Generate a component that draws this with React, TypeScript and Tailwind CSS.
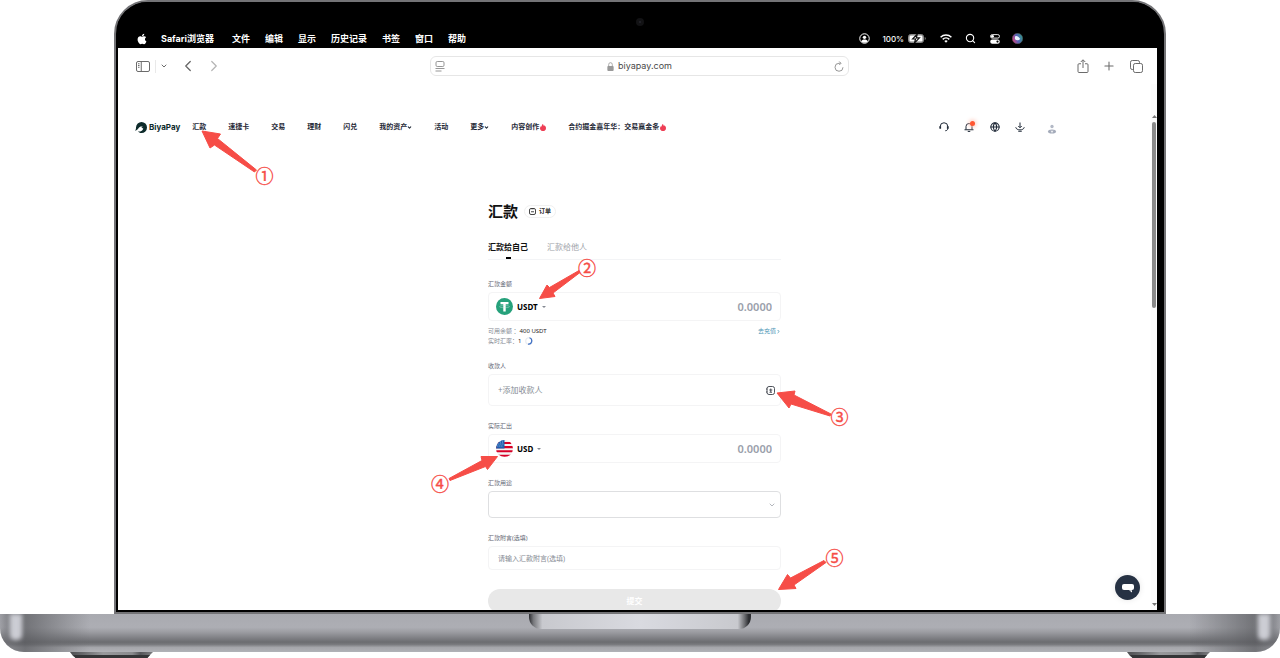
import React from "react";
import { FaApple } from "react-icons/fa";
import { ChevronDown, ChevronLeft, ChevronRight, Globe, Plus, RotateCw, Search } from "lucide-react";

const RED = "#f64d47";

function Flame() {
  return (
    <svg viewBox="0 0 12 14" className="h-[7px] w-[6px] shrink-0" aria-hidden="true">
      <path
        d="M5.6 0C7 1.2 7.6 2.6 7.5 4.2 8.3 3.9 8.7 3.3 8.8 2.5 10.8 4.2 12 6.2 12 8.3 12 11.6 9.4 14 6 14S0 11.6 0 8.3C0 6.4.9 4.9 2.2 3.9c.1.8.4 1.3 1 1.6C3.3 3.2 4 1.3 5.6 0Z"
        fill="#ee3f55"
      />
    </svg>
  );
}

function BatteryIcon() {
  return (
    <svg viewBox="0 0 18 9" className="h-[9px] w-[18px]" aria-hidden="true">
      <rect x="0.5" y="0.5" width="15" height="8" rx="2.2" fill="#777" stroke="#8a8a8a" />
      <rect x="1.5" y="1.5" width="13" height="6" rx="1.2" fill="#fff" />
      <path d="M9.3 0 4.6 5h2.9L6.500 9l4.900-5.100H8.400Z" fill="#fff" stroke="#111" strokeWidth="1.2" />
      <path d="M16.7 3v3c.7-.2 1.1-.8 1.1-1.500S17.400 3.200 16.700 3Z" fill="#777" />
    </svg>
  );
}

function WifiIcon() {
  return (
    <svg viewBox="0 0 24 18" className="h-[9px] w-[12px]" fill="none" stroke="#fff" strokeWidth="3" aria-hidden="true">
      <path d="M1.2 6.5C7.3.6 16.7.6 22.8 6.5" />
      <path d="M5.4 10.7c3.8-3.6 9.4-3.6 13.2 0" />
      <path d="M12 17.5 8.6 14c1.900-1.900 4.900-1.900 6.800 0Z" fill="#fff" stroke="none" />
    </svg>
  );
}

function UserCircleIcon() {
  return (
    <svg viewBox="0 0 22 22" className="size-[11px]" aria-hidden="true">
      <circle cx="11" cy="11" r="9.5" fill="none" stroke="#fff" strokeWidth="2" />
      <circle cx="11" cy="8.7" r="3.4" fill="#fff" />
      <path d="M4.5 17c1-3.2 3.5-4.2 6.5-4.2s5.5 1 6.5 4.2c-3.6 3.4-9.4 3.4-13 0Z" fill="#fff" />
    </svg>
  );
}

function ControlCenterIcon() {
  return (
    <svg viewBox="0 0 20 20" className="size-[10px]" aria-hidden="true">
      <rect x="1" y="1.2" width="18" height="7" rx="3.5" fill="none" stroke="#fff" strokeWidth="1.8" />
      <circle cx="5" cy="4.7" r="2.8" fill="#fff" />
      <rect x="0.5" y="11" width="19" height="8.5" rx="4.2" fill="#fff" />
      <circle cx="15" cy="15.2" r="2.2" fill="#000" />
    </svg>
  );
}

function SiriIcon() {
  return (
    <svg viewBox="0 0 20 20" className="size-[11px]" aria-hidden="true">
      <defs>
        <linearGradient id="siri" x1="0" y1="0.6" x2="1" y2="0.3">
          <stop offset="0" stopColor="#d8437e" />
          <stop offset="0.45" stopColor="#5a5fb8" />
          <stop offset="1" stopColor="#2c9a8a" />
        </linearGradient>
      </defs>
      <circle cx="10" cy="10" r="9.5" fill="url(#siri)" stroke="#555" />
      <path d="M6 6c3-1.500 6 1 9 5-2.500 2.500-7 3-9 1-1-1.500-1-4.500 0-6Z" fill="#e9f3ff" />
    </svg>
  );
}

const menus = ["文件", "编辑", "显示", "历史记录", "书签", "窗口", "帮助"];

function MenuBar() {
  return (
    <div className="relative flex h-[46px] items-end bg-black text-white">
      <span className="absolute left-1/2 top-[16px] flex size-[8px] -translate-x-1/4 items-center justify-center rounded-full bg-[#121214]">
        <span className="size-[2px] rounded-full bg-[#26262c]" />
      </span>
      <div className="flex h-[19px] flex-1 items-center pl-[18px] pr-[134px] text-[9px] font-medium leading-[12px]">
        <FaApple className="mr-[13px] size-[12px]" />
        <span className="mr-[18px] font-bold">Safari浏览器</span>
        <div className="flex gap-[15px] font-bold">
          {menus.map((m) => (
            <span key={m}>{m}</span>
          ))}
        </div>
        <div className="ml-auto flex items-center">
          <UserCircleIcon />
          <span className="ml-[12px] mr-[4px] text-[8px]">100%</span>
          <BatteryIcon />
          <span className="ml-[14px]">
            <WifiIcon />
          </span>
          <Search className="ml-[13px] size-[11px]" strokeWidth={2.4} />
          <span className="ml-[14px]">
            <ControlCenterIcon />
          </span>
          <span className="ml-[12px]">
            <SiriIcon />
          </span>
        </div>
      </div>
    </div>
  );
}

function Toolbar() {
  return (
    <div className="grid h-[36px] shrink-0 grid-cols-[1fr_419px_1fr] items-center pl-[18px] pr-[14px] text-[#6b6b6b]">
      <div className="flex items-center">
        <button type="button" aria-label="边栏">
          <svg viewBox="0 0 28 22" className="h-[11px] w-[14px]" fill="none" stroke="currentColor" strokeWidth="2" aria-hidden="true">
            <rect x="1" y="1" width="26" height="20" rx="3" />
            <path d="M10.500 1v20M4 5.500h3M4 9h3M4 12.500h3" />
          </svg>
        </button>
        <span className="ml-[5px] h-[13px] w-px bg-[#e9e9e9]" />
        <button type="button" aria-label="标签页组" className="ml-[4px]">
          <ChevronDown className="size-[8px]" strokeWidth={3} />
        </button>
        <button type="button" aria-label="后退" className="ml-[11px]">
          <ChevronLeft className="size-[18px]" strokeWidth={1.8} />
        </button>
        <button type="button" aria-label="前进" className="ml-[8px] text-[#b4b4b4]">
          <ChevronRight className="size-[18px]" strokeWidth={1.6} />
        </button>
      </div>
      <div className="flex h-[20px] items-center justify-between rounded-[6px] border border-[#e6e6e6] px-[4px]">
        <svg viewBox="0 0 20 22" className="h-[11px] w-[10px]" fill="none" stroke="#8b8b8b" strokeWidth="1.8" aria-hidden="true">
          <rect x="2" y="1" width="16" height="10" rx="2.5" />
          <path d="M1 15h18M1 20h12" />
        </svg>
        <div className="flex items-center gap-[4px] text-[9px] leading-[12px] text-[#4a4a4a]">
          <svg viewBox="0 0 14 20" className="h-[9px] w-[7px]" aria-hidden="true">
            <rect x="0" y="9" width="14" height="11" rx="2" fill="#9a9a9a" />
            <path d="M3 9V5.500a4 4 0 0 1 8 0V9" fill="none" stroke="#9a9a9a" strokeWidth="1.8" />
          </svg>
          biyapay.com
        </div>
        <button type="button" aria-label="刷新">
          <svg viewBox="0 0 20 22" className="h-[11px] w-[10px]" fill="none" stroke="#8b8b8b" strokeWidth="1.8" aria-hidden="true">
            <path d="M18 12.500A8 8 0 1 1 10 4.500h3M10.500 1l3.500 3.500L10.500 8" />
          </svg>
        </button>
      </div>
      <div className="flex items-center justify-end">
        <button type="button" aria-label="分享">
          <svg viewBox="0 0 24 28" className="h-[14px] w-[12px]" fill="none" stroke="currentColor" strokeWidth="2" aria-hidden="true">
            <path d="M8 9.500H4a2 2 0 0 0-2 2V25a2 2 0 0 0 2 2h16a2 2 0 0 0 2-2V11.500a2 2 0 0 0-2-2h-4M12 18V2M7.500 6 12 1.500 16.500 6" />
          </svg>
        </button>
        <button type="button" aria-label="新标签页" className="ml-[13px]">
          <Plus className="size-[14px]" strokeWidth={1.8} />
        </button>
        <button type="button" aria-label="标签页概览" className="ml-[14px]">
          <svg viewBox="0 0 26 26" className="size-[13px]" fill="none" stroke="currentColor" strokeWidth="2" aria-hidden="true">
            <rect x="7" y="7" width="18" height="18" rx="3.5" />
            <path d="M7 19H4.500A3.500 3.500 0 0 1 1 15.500v-11A3.500 3.500 0 0 1 4.500 1h11A3.500 3.500 0 0 1 19 4.500V7" />
          </svg>
        </button>
      </div>
    </div>
  );
}

type NavItem = { label: string; menu?: boolean; hot?: boolean };

const navItems: NavItem[] = [
  { label: "汇款" },
  { label: "速捷卡" },
  { label: "交易" },
  { label: "理财" },
  { label: "闪兑" },
  { label: "我的资产", menu: true },
  { label: "活动" },
  { label: "更多", menu: true },
  { label: "内容创作", hot: true },
  { label: "合约掘金嘉年华：交易赢金条", hot: true },
];

function SiteHeader() {
  return (
    <header className="relative flex h-[86px] items-center pl-[17px] pr-[94px] text-[#1f2937]">
      <a href="#home" className="mr-[12px] flex items-center gap-[2px] font-['Inter',sans-serif] text-[8px] font-bold leading-[12px] text-[#0d2b2b]">
        <svg viewBox="0 0 24 22" className="h-[11px] w-[12px]" aria-hidden="true">
          <path
            d="M13 0a11 11 0 0 1 0 22c-3.2 0-5.5-1.2-7.3-3 4 .8 8.800-.6 10.300-4.500.9-2.600 0-4.500-1.500-5.500-3-.6-6 .6-7.200 3.200C6.200 14.500 4.500 16.600 0 17.300 1.700 15.400 2 13.500 2.100 10.500A11 11 0 0 1 13 0Z"
            fill="#0d2b2b"
          />
          <path d="M12 9.300c1 1.200 2.600 1 4.600.4l-.8 3.500Z" fill="#0d2b2b" />
        </svg>
        BiyaPay
      </a>
      <nav className="flex items-center gap-[22px] text-[7px] font-bold leading-[12px]">
        {navItems.map((item) => (
          <a key={item.label} href="#nav" className="flex items-center whitespace-nowrap">
            {item.label}
            {item.menu && <ChevronDown className="size-[5px]" strokeWidth={5} />}
            {item.hot && (
              <span className="ml-px">
                <Flame />
              </span>
            )}
          </a>
        ))}
      </nav>
      <div className="ml-auto flex items-center">
        <button type="button" aria-label="客服">
          <svg viewBox="0 0 20 20" className="size-[10px]" fill="none" stroke="currentColor" strokeWidth="2" aria-hidden="true">
            <path d="M2.500 12V9a7.500 7.500 0 0 1 15 0v4c0 2.800-2 4.500-5 4.500" />
            <path d="M2.500 8.500v5M17.500 8.500v5" strokeWidth="3.4" />
          </svg>
        </button>
        <button type="button" aria-label="通知" className="relative ml-[15px]">
          <svg viewBox="0 0 20 20" className="size-[10px]" fill="none" stroke="currentColor" strokeWidth="2" aria-hidden="true">
            <path d="M4 15V9a6 6 0 0 1 12 0v6M1 15.500h18M7.500 18.800h5" />
          </svg>
          <span className="absolute -right-px -top-px size-[5px] rounded-full bg-[#ff5530] shadow-[0_0_4px_1px_#ffc4b5]" />
        </button>
        <button type="button" aria-label="语言" className="ml-[16px]">
          <Globe className="size-[10px]" strokeWidth={2.6} />
        </button>
        <button type="button" aria-label="下载" className="ml-[15px]">
          <svg viewBox="0 0 20 20" className="size-[10px]" fill="none" stroke="currentColor" strokeWidth="2" aria-hidden="true">
            <path d="M10 1v10M6.500 8l3.500 3.500L13.500 8M1.500 10.500c1 7 16 7 17 0M6.500 18.500h7" />
          </svg>
        </button>
        <button type="button" aria-label="账户" className="ml-[22px] pt-[3px]">
          <svg viewBox="0 0 20 20" className="size-[10px]" aria-hidden="true">
            <circle cx="10" cy="5" r="3.300" fill="#b3b9c6" />
            <ellipse cx="10" cy="15" rx="8" ry="4" fill="#a4abba" />
            <path d="M7 13.500h6l-3 4.500Z" fill="#eef0f4" />
          </svg>
        </button>
      </div>
      <svg viewBox="0 0 90 70" className="pointer-events-none absolute left-[72px] top-[36px] h-[70px] w-[90px] overflow-visible" aria-hidden="true">
        <path d="M12 11 30.500 14 27.500 18.500 66.500 50 64.500 52 24.500 25 20 28Z" fill={RED} stroke={RED} strokeLinejoin="round" />
        <text x="74.500" y="63" textAnchor="middle" fontSize="18" fill={RED} stroke={RED} strokeWidth="0.4">
          ①
        </text>
      </svg>
    </header>
  );
}

const callouts = [
  { n: "②", x: 99, y: 72, d: "M51.500 95.500 59 82 61.500 84.500 91 67.500 92 69.500 65 90 67 93.500Z" },
  { n: "③", x: 351.5, y: 221, d: "M289 190 307 188 306 192 343 211 342 213 303 201 301 205Z" },
  { n: "④", x: -48, y: 288, d: "M9.500 253.500-7 253.500-6 257.500-39 275.500-38 277.500-2.500 263.500-.5 266.500Z" },
  { n: "⑤", x: 346.5, y: 362, d: "M290.500 386.500 299.500 371.500 302.500 375 336 357.500 338 359.500 306 382 308 385.500Z" },
];

function Callouts() {
  return (
    <svg viewBox="0 0 293 410" className="pointer-events-none absolute left-0 top-0 h-[410px] w-[293px] overflow-visible" aria-hidden="true">
      {callouts.map((c) => (
        <g key={c.n} fill={RED} stroke={RED}>
          <path d={c.d} strokeLinejoin="round" />
          <text x={c.x} y={c.y} textAnchor="middle" fontSize="18" strokeWidth="0.4">
            {c.n}
          </text>
        </g>
      ))}
    </svg>
  );
}

function TetherIcon() {
  return (
    <svg viewBox="0 0 34 34" className="size-[17px]" aria-hidden="true">
      <circle cx="17" cy="17" r="17" fill="#26a17b" />
      <path d="M9 8h16v4.500h-5.600V27h-4.800V12.500H9Z" fill="#fff" />
      <ellipse cx="17" cy="17.300" rx="10" ry="2.200" fill="none" stroke="#d4ece4" strokeWidth="0.8" />
    </svg>
  );
}

function UsFlagIcon() {
  return (
    <svg viewBox="0 0 34 34" className="size-[17px]" aria-hidden="true">
      <defs>
        <clipPath id="flag">
          <circle cx="17" cy="17" r="17" />
        </clipPath>
      </defs>
      <g clipPath="url(#flag)">
        <rect width="34" height="34" fill="#f4f4f4" />
        <path d="M0 6h34M0 14.300h34M0 22.600h34M0 31.500h34" stroke="#d80027" strokeWidth="4.200" />
        <rect width="17" height="17" fill="#1d5fb0" />
        <path d="M8 4h1.500M12.500 4H14M5 8h1.500M9 8h1.500M13 8h1.500M3 12h1.500M7 12h1.500M11 12h1.500" stroke="#dce8f7" strokeWidth="1.600" />
      </g>
    </svg>
  );
}

function Label({ htmlFor, children }: { htmlFor: string; children: React.ReactNode }) {
  return (
    <label htmlFor={htmlFor} className="mb-[4px] block text-[6px] leading-[8px] text-[#5f6673]">
      {children}
    </label>
  );
}

function AmountField({ id, code, icon }: { id: string; code: string; icon: React.ReactNode }) {
  return (
    <div className="flex h-[29px] items-center rounded-[4px] border border-[#f4f4f5] pl-[7px] pr-[8px]">
      <button type="button" className="flex items-center text-[8px] font-bold leading-[12px] text-black">
        {icon}
        <span className="ml-[4px]">{code}</span>
        <svg viewBox="0 0 8 4" className="ml-[4px] h-[2px] w-[4px]" aria-hidden="true">
          <path d="M0 0h8L4 4Z" fill="#858a93" />
        </svg>
      </button>
      <input
        id={id}
        placeholder="0.0000"
        className="min-w-0 flex-1 bg-transparent text-right text-[11px] font-semibold leading-[14px] outline-none placeholder:text-[#9aa0ab]"
      />
    </div>
  );
}

function RemitForm() {
  return (
    <form className="relative mx-auto w-[293px] max-w-full">
      <div className="flex h-[16px] items-center">
        <h1 className="text-[15px] font-bold leading-[16px] text-[#111]">汇款</h1>
        <button
          type="button"
          className="ml-[6px] flex h-[13px] items-center gap-[3px] rounded-full border border-[#f0f0f0] px-[4px] text-[6px] font-bold leading-[8px] text-[#222]"
        >
          <svg viewBox="0 0 14 14" className="size-[7px]" fill="none" stroke="#333" strokeWidth="1.8" aria-hidden="true">
            <rect x="1" y="1" width="12" height="12" rx="3" />
            <path d="M4.500 1.500h5M4 7.500h6" />
          </svg>
          订单
        </button>
      </div>

      <div role="tablist" className="mt-[22px] flex items-start gap-[19px] border-b border-[#f3f4f6] text-[8px] leading-[12px]">
        <button type="button" role="tab" aria-selected="true" className="flex flex-col items-center font-bold text-[#111]">
          汇款给自己
          <span className="mt-[4px] h-[2px] w-[5px] bg-black" />
        </button>
        <button type="button" role="tab" aria-selected="false" className="text-[#a0a3a9]">
          汇款给他人
        </button>
      </div>

      <div className="mt-[20px]">
        <Label htmlFor="amount">汇款金额</Label>
        <AmountField id="amount" code="USDT" icon={<TetherIcon />} />
        <div className="mt-[5px] text-[6px] leading-[10px] text-[#858a93]">
          <p className="flex justify-between">
            <span>
              可用余额 ：<span className="text-[#222]">400 USDT</span>
            </span>
            <a href="#deposit" className="flex items-center text-[#4a95b5]">
              去充值
              <ChevronRight className="size-[5px]" strokeWidth={4} />
            </a>
          </p>
          <p className="flex items-center">
            实时汇率：<span className="text-[#222]">1</span>
            <svg viewBox="0 0 16 16" className="ml-[4px] size-[8px]" fill="none" strokeWidth="2.4" aria-hidden="true">
              <circle cx="8" cy="8" r="6.5" stroke="#e8ebf1" />
              <path d="M9 1.600A6.500 6.500 0 0 1 6 14.200" stroke="#3d6fc4" />
            </svg>
          </p>
        </div>
      </div>

      <div className="mt-[16px]">
        <Label htmlFor="payee">收款人</Label>
        <div className="flex h-[32px] items-center rounded-[4px] border border-[#f4f4f5] pl-[9px] pr-[5px]">
          <input
            id="payee"
            placeholder="+添加收款人"
            className="min-w-0 flex-1 bg-transparent text-[8px] leading-[12px] outline-none placeholder:text-[#868b94]"
          />
          <button type="button" aria-label="选择收款人">
            <svg viewBox="0 0 18 18" className="size-[9px]" fill="none" stroke="#3a3f48" strokeWidth="1.8" aria-hidden="true">
              <rect x="2" y="1" width="15" height="16" rx="4" />
              <path d="M0 6h3M0 12h3M6.500 8h6M7 12.500h5M9.500 5v7" />
            </svg>
          </button>
        </div>
      </div>

      <div className="mt-[16px]">
        <Label htmlFor="payout">实际汇出</Label>
        <AmountField id="payout" code="USD" icon={<UsFlagIcon />} />
      </div>

      <div className="mt-[16px]">
        <Label htmlFor="purpose">汇款用途</Label>
        <div className="grid items-center">
          <select
            id="purpose"
            defaultValue=""
            className="col-start-1 row-start-1 h-[27px] appearance-none rounded-[4px] border border-[#dedfe1] bg-transparent px-[9px] text-[8px] outline-none"
          >
            <option value="" />
          </select>
          <ChevronDown className="pointer-events-none col-start-1 row-start-1 mr-[5px] size-[8px] justify-self-end text-[#b4b7bd]" strokeWidth={3} />
        </div>
      </div>

      <div className="mt-[16px]">
        <Label htmlFor="note">汇款附言(选填)</Label>
        <input
          id="note"
          placeholder="请输入汇款附言(选填)"
          className="block h-[24px] w-full rounded-[4px] border border-[#f4f4f5] bg-transparent px-[9px] text-[7px] leading-[12px] outline-none placeholder:text-[#868b94]"
        />
      </div>

      <button
        type="button"
        className="mt-[19px] block h-[24px] w-full rounded-full bg-[#e8e8e8] text-center text-[8px] font-bold leading-[12px] text-white"
      >
        提交
      </button>
      <Callouts />
    </form>
  );
}

function ScrollBar() {
  return (
    <div className="flex w-[6px] shrink-0 flex-col items-center bg-[#fcfcfc] pb-[4px] pt-[31px]">
      <svg viewBox="0 0 10 6" className="h-[3px] w-[5px]" aria-hidden="true">
        <path d="M0 6h10L5 0Z" fill="#777" />
      </svg>
      <span className="mt-[4px] h-[186px] w-[4px] rounded-full bg-[#8a8a8a]" />
      <svg viewBox="0 0 10 6" className="mt-auto h-[3px] w-[5px]" aria-hidden="true">
        <path d="M0 0h10L5 6Z" fill="#777" />
      </svg>
    </div>
  );
}

function Foot() {
  return (
    <svg viewBox="0 0 83 6" className="h-[6px] w-[83px]" aria-hidden="true">
      <defs>
        <linearGradient id="foot">
          <stop offset="0" stopColor="#4d4e51" />
          <stop offset="0.15" stopColor="#66676a" />
          <stop offset="0.4" stopColor="#98999c" />
          <stop offset="0.75" stopColor="#8a8b8e" />
          <stop offset="0.85" stopColor="#55565a" />
          <stop offset="1" stopColor="#7d7e81" />
        </linearGradient>
      </defs>
      <path d="M0 0h83l-4 4-2 2H6L3 4Z" fill="url(#foot)" />
      <path d="M3 3h77l-2.500 3H5.500Z" fill="#343537" />
    </svg>
  );
}

function EdgeShine() {
  return (
    <div className="h-full w-[90px] bg-[linear-gradient(to_right,rgba(110,111,116,0.2)_0%,rgba(110,111,116,0.6)_8%,rgba(90,91,95,0.7)_28%,rgba(100,101,105,0.5)_55%,rgba(120,121,125,0)_100%)]">
      <div className="ml-[10px] h-[26px] w-[12px] rounded-b-[5px] bg-[#cccdd4] blur-[2px]" />
    </div>
  );
}

function LaptopBase() {
  return (
    <div className="shrink-0">
      <div className="h-[38px] overflow-hidden rounded-b-[24px] bg-[linear-gradient(to_bottom,#a9aab0_0%,#adaeb4_35%,#9b9ca1_48%,#6b6c70_74%,#78797d_80%,#a5a6ab_88%,#b1b2b7_100%)]">
        <div className="flex h-full justify-between">
          <EdgeShine />
          <div className="h-[15px] w-[222px] rounded-b-[12px] bg-[linear-gradient(to_right,#2b2c30_0%,#77787c_2%,#c8c9ce_6%,#d9dae0_50%,#c8c9ce_94%,#6f7074_97%,#2b2c30_99%)]" />
          <div className="flex -scale-x-100">
            <EdgeShine />
          </div>
        </div>
      </div>
      <div className="flex h-[6px] justify-between px-[70px]">
        <Foot />
        <Foot />
      </div>
    </div>
  );
}

export default function App() {
  return (
    <div className="flex h-screen flex-col overflow-hidden bg-white font-['Inter','Noto_Sans_CJK_SC',sans-serif]">
      <div className="mx-[114px] flex min-h-0 flex-1 flex-col overflow-hidden rounded-t-[34px] border-2 border-[#737376] bg-black pb-[2px] pl-[2px] pr-[7px]">
        <MenuBar />
        <div className="relative flex min-h-0 flex-1 flex-col overflow-hidden bg-white">
          <Toolbar />
          <div className="flex min-h-0 flex-1 font-['Noto_Sans','Noto_Sans_CJK_SC',sans-serif]">
            <div className="min-w-0 flex-1">
              <SiteHeader />
              <main className="pt-[33px]">
                <RemitForm />
              </main>
            </div>
            <ScrollBar />
          </div>
          <button
            type="button"
            aria-label="在线客服"
            className="absolute bottom-[10px] right-[17px] flex size-[25px] items-center justify-center rounded-full bg-[#263143] shadow-[0_0_6px_#0000001a]"
          >
            <svg viewBox="0 0 24 20" className="h-[10px] w-[12px]" aria-hidden="true">
              <path d="M4 2h16a4 4 0 0 1 4 4v4a4 4 0 0 1-4 4H4a4 4 0 0 1-4-4V6a4 4 0 0 1 4-4Z" fill="#fff" />
              <path d="M14 14.500h6V19Z" fill="#fff" />
            </svg>
          </button>
        </div>
      </div>
      <LaptopBase />
    </div>
  );
}
